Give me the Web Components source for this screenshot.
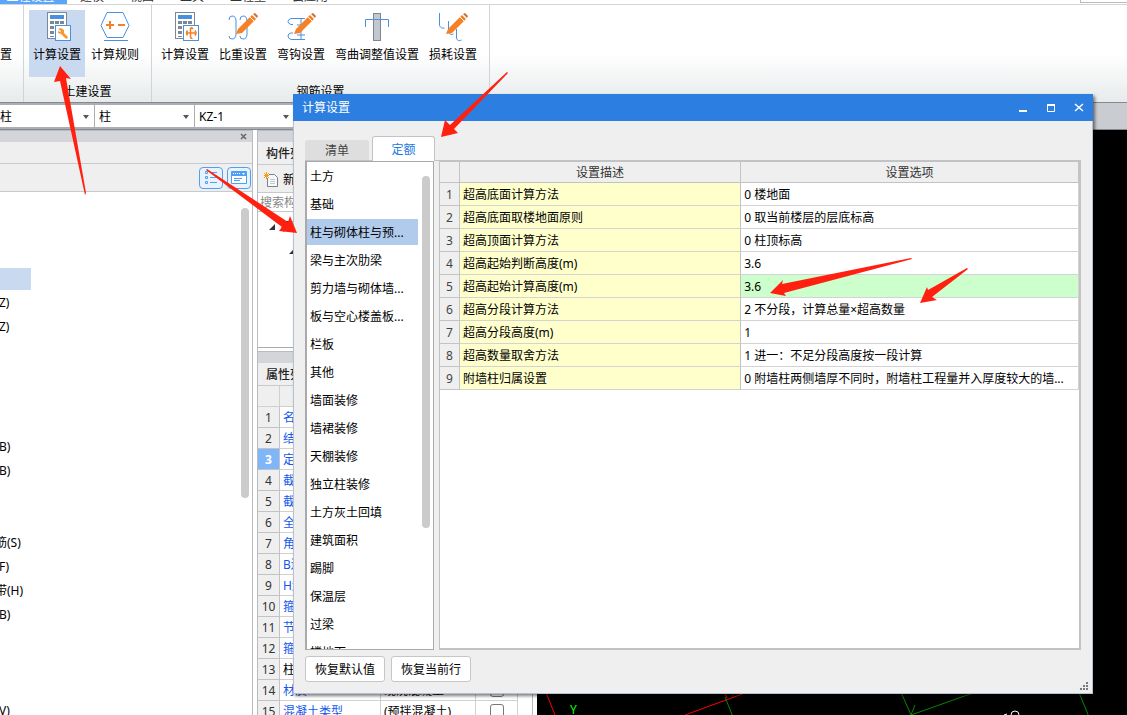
<!DOCTYPE html>
<html lang="zh-CN">
<head>
<meta charset="utf-8">
<title>计算设置</title>
<style>
html,body{height:100%}
body{margin:0;overflow:hidden;background:#fff;color:#000;font:12px/16px "Noto Sans","Noto Sans CJK SC",sans-serif}
</style>
</head>
<body>
<app-shell></app-shell>
<script>
const RESET = `*{box-sizing:border-box}button,select,input{font:inherit;color:inherit;margin:0}button{border:0;background:none;padding:0}`;
function define(name, html, setup) {
  customElements.define(name, class extends HTMLElement {
    constructor() {
      super();
      const t = document.createElement('template');
      t.innerHTML = (typeof html === 'function' ? html(this) : html).replace('<style>', '<style>' + RESET);
      this.attachShadow({mode: 'open'}).append(t.content.cloneNode(true));
    }
    connectedCallback() { if (setup) setup(this, this.shadowRoot); }
  });
}

/* ---------- icons ---------- */
const calc = `<g fill="none" stroke="#7b8794"><rect x="5.5" y=".5" width="19" height="26" fill="#fff"/></g><rect x="8" y="3" width="14" height="4" fill="#4a90e2"/><g fill="#7b8794"><path d="M8 9h4v3H8zM13 9h4v3h-4zM18 9h4v3h-4zM8 14h4v3H8zM8 19h4v3H8zM8 24h4v1H8z"/></g><rect x="13.5" y="13.5" width="15" height="15" fill="#fff" stroke="#4a90e2"/>`;
const pencil = `<path d="M8 22l2-5L24 3l4 4-14 14z" fill="#f58025"/><path d="M25 2l2-1 3 3-1 2z" fill="#c9733a"/><path d="M22 5l4 4" stroke="#fff"/>`;
const ICONS = {
  calcWrench: calc + `<path d="M16 17l3-1 3 2v3l4 4-1 2-2-1-4-4-3-1v-2l2 1 1-1z" fill="#f59a3c"/>`,
  calcMove: calc + `<path d="M20.500 16v9q0 1.500 2 1.500M20.500 16q1.500-.5 2.500 1M16 21h10M17.500 18.500q-2 2.500 0 5M25 18.500q2 2.500 0 5" fill="none" stroke="#f58025" stroke-width="1.500"/>`,
  rules: `<path d="M7 .5h16l6 13-6 12H7l-6-12z" fill="#fff" stroke="#4a90e2"/><path d="M4 28.5h24" stroke="#4a90e2"/><path d="M6 13h8M10 9v8M18 13h7" stroke="#f58025" stroke-width="2"/>`,
  weight: `<path d="M1 8q0-4 3-4 4 0 4 5v13q0 5-4 5-3 0-3-3M12 8q0-4 3-4 4 0 4 5v13q0 5-4 5-3 0-3-3" fill="none" stroke="#4a90e2"/>${pencil}`,
  hook: `<path d="M19 6.500H5q-3 1-3 3t3 3h2M19 27.500H5q-3-1-3-3.500t3-3h2M11 13h8M15 7v20M11 23h8" fill="none" stroke="#4a90e2"/>${pencil}`,
  bend: `<rect x="11.500" y="1.500" width="7" height="27" fill="#c3c8ce" stroke="#7b8794"/><path d="M-.5 15V7.500h23V15" transform="translate(4)" fill="none" stroke="#4a90e2"/>`,
  loss: `<path d="M1.500 1v12q1 4 5 3M10.500 9v10q1 5 5 3M18.500 17v9q1 4 5 2" fill="none" stroke="#4a90e2"/>${pencil}`,
  edge: `<path d="M0 4.500h15.500v22H0" fill="#fff" stroke="#7b8794"/><path d="M12 20l5-1 1 5-4 3z" fill="#f59a3c"/>`
};

define('ribbon-button', el => `<style>
:host{display:block;min-width:56px}
button{width:100%;height:67px;display:flex;flex-direction:column;align-items:center;padding:2px 4px 0;gap:5px;white-space:nowrap}
:host([active]) button{background:#c9d9f0}
:host([cut]){min-width:0}:host([cut]) button{padding:2px 0 0;align-items:flex-end}
svg{display:block;flex:none}
</style><button type="button"><svg width="30" height="30">${ICONS[el.getAttribute('icon')]}</svg><span><slot></slot></span></button>`);

define('ribbon-group', el => `<style>
:host{display:flex;flex-direction:column;gap:4px;flex:none;padding:5px 8px 0 5px;border-right:1px solid #d0d4d7}
:host([cut]){box-sizing:border-box;width:24px;padding:5px 11px 0 0;overflow:hidden;align-items:flex-end}
.row{display:flex;gap:2px}
.name{text-align:center;line-height:22px;padding-left:3px}
</style><div class="row"><slot></slot></div><div class="name">${el.getAttribute('name') || ''}</div>`);

define('app-menu', `<style>
:host{display:flex;height:5px;overflow:hidden;border-bottom:1px solid #d5d5d5;align-items:flex-end;color:#333;box-sizing:border-box}
nav{display:flex;align-items:flex-end;flex:1}
a{color:inherit;text-decoration:none;line-height:14px;width:50px;text-align:center;flex:none}
a.on{width:67px;background:#5aa6f8;color:#fff;padding-right:6px}
a.w{width:62px}
i{width:47px;height:3px;border:solid #bbb;border-width:0 0 1px 1px;align-self:flex-start}
</style><nav><a class="on" href="#">工程设置</a><a href="#">建模</a><a href="#">视图</a><a href="#">工具</a><a class="w" href="#">工程量</a><a class="w" href="#">云应用</a></nav><i></i>`);

define('app-ribbon', `<style>
:host{display:flex;height:97px;background:linear-gradient(#fff 50%,#e7ebec)}
</style>
<ribbon-group cut><ribbon-button cut icon="edge">置</ribbon-button></ribbon-group>
<ribbon-group name="土建设置"><ribbon-button active icon="calcWrench">计算设置</ribbon-button><ribbon-button icon="rules">计算规则</ribbon-button></ribbon-group>
<ribbon-group name="钢筋设置"><ribbon-button icon="calcMove">计算设置</ribbon-button><ribbon-button icon="weight">比重设置</ribbon-button><ribbon-button icon="hook">弯钩设置</ribbon-button><ribbon-button icon="bend">弯曲调整值设置</ribbon-button><ribbon-button icon="loss">损耗设置</ribbon-button></ribbon-group>`);

define('picker-bar', `<style>
:host{display:flex;height:28px;box-sizing:border-box;border:solid #858a90;border-width:1px 0;background:#c9ccd1;align-items:center}
label{display:block;position:relative;width:100px;height:26px;padding:2px 1px 2px 0;background:#abaeb2;flex:none}
label:first-of-type{width:95px}
select{appearance:none;display:block;width:100%;height:100%;border:0;border-radius:0;background:#fff;padding:1px 4px 0;outline:0}
label:first-of-type select{padding-left:0}
label::after{content:"";position:absolute;right:6px;top:12px;border:3px solid transparent;border-top:4px solid #555}
</style>
<label><select aria-label="楼层"><option>柱</option></select></label>
<label><select aria-label="类别"><option>柱</option></select></label>
<label><select aria-label="构件"><option>KZ-1</option></select></label>`);

define('nav-panel', `<style>
:host{display:flex;flex-direction:column;background:#fff;border-right:1px solid #b9bbc0;min-height:0;overflow:hidden}
.strip{height:12px;background:#d3d5db;display:flex;justify-content:flex-end;border-top:1px solid #b8bbc1}
.strip button{width:16px;height:11px;display:grid;place-items:center}
.head{height:22px;background:#efefef;border-bottom:1px solid #c6c9ce}
.tools{height:28px;background:#efefef;border-bottom:1px solid #c6c9ce;display:flex;gap:4px;justify-content:flex-end;align-items:center;padding-right:1px}
.tools button{width:24px;height:22px;border:1px solid #4da0f5;border-radius:4px;background:#e8f3fe;display:grid;place-items:center}
svg{display:block}
.body{flex:1;display:flex;min-height:0;overflow:hidden;justify-content:space-between}
ul{list-style:none;margin:0;padding:3px 0 0}
li{height:24px;line-height:24px;white-space:nowrap}
li.sel{width:31px;height:22px;margin:1px 0;background:#c9d9f0}
li.off{margin-left:-1px}
li.part{margin-left:-5px}
.bar{width:8px;height:290px;margin:16px 3px 0 0;border-radius:4px;background:#cbcbcb}
</style>
<div class="strip"><button aria-label="关闭"><svg width="8" height="8"><path d="M1 1l5 5M6 1L1 6" stroke="#666" stroke-width="1.5"/></svg></button></div>
<div class="head"></div>
<div class="tools"><button aria-label="列表"><svg width="16" height="16" fill="none" stroke="#4da0f5"><path d="M2.500 1.500h2v2h-2zM2.500 6.500h2v2h-2zM2.500 11.500h2v2h-2zM7 2.500h7M7 7.500h7M7 12.500h7"/></svg></button><button aria-label="窗口"><svg width="16" height="16" fill="none" stroke="#4da0f5"><path fill="#fff" d="M.5 1.500h15v12H.5z"/><path fill="#4da0f5" stroke="none" d="M1 1h14v5H1z"/><path d="M2 3.500h7" stroke="#fff" stroke-dasharray="1 1"/><path d="M11 3h3l-1.500 2z" fill="#fff" stroke="none"/><path d="M3 8.500h8M3 10.500h6"/></svg></button></div>
<div class="body"><ul></ul><div class="bar"></div></div>`, (el, r) => {
  const rows = ['', '', '', '*', 'Z)', 'Z)', '', '', '', '', 'B)', 'B)', '', '', '筋(S)', 'F)', '带(H)', 'B)', '', '', '', 'V)'];
  r.querySelector('ul').innerHTML = rows.map(t => `<li class="${t === '*' ? 'sel' : t.length > 2 ? 'part' : 'off'}">${t === '*' ? '' : t}</li>`).join('');
});

define('parts-panel', `<style>
:host{display:flex;flex-direction:column;background:#fff;border:solid #b9bbc0;border-width:0 1px;min-height:0;overflow:hidden}
.strip{height:12px;background:#d3d5db;border-top:1px solid #b8bbc1;flex:none}
h2{margin:0;font-size:12px;font-weight:500;height:23px;line-height:24px;padding-left:8px;background:#efefef;border-bottom:1px solid #c6c9ce;flex:none;color:#222}
.tools{height:28px;flex:none;background:#efefef;border-bottom:1px solid #c6c9ce}
.tools button{display:flex;align-items:center;gap:4px;height:28px;padding:1px 0 0 6px}
input[type=text]{height:19px;flex:none;border:0;border-bottom:1px solid #c6c9ce;padding:0 2px;outline:0;width:100%}
input::placeholder{color:#888;opacity:1}
.tree{height:136px;flex:none;border-bottom:1px solid #aaa;padding:3px 0 0 10px}
.tree div{height:24px;display:flex;align-items:center;gap:5px}
.tree div+div{padding-left:20px}
.gap{height:3px;flex:none}
table{border-collapse:separate;border-spacing:0;table-layout:fixed;width:260px;flex:none}
th,td{height:21px;padding:2px 0 0 3px;border:solid #d0d0d0;border-width:0 1px 1px 0;line-height:16px;white-space:nowrap;text-align:left;font-weight:400}
thead th,tbody th{background:#efefef;color:#333}
tbody th{text-align:center;padding:2px 0 0;border-color:#c3c3c3}
tbody td:nth-child(2){color:#1258ee}
tr.plain td:nth-child(2){color:#000}
tr.on th{background:#7fb6fa;color:#fff;font-weight:700}
td:last-child{text-align:center;padding:0}
input[type=checkbox]{appearance:none;display:block;width:14px;height:14px;margin:0 auto;border:1px solid #777;border-radius:3px;background:#fff}
</style>
<div class="strip"></div><h2>构件列</h2>
<div class="tools"><button><svg width="15" height="16"><path d="M3.500 2.500h7l3 3v9h-10z" fill="#f6f8fa" stroke="#76828e"/><path d="M6 7.500h5M6 9.500h5M6 11.500h5" stroke="#c3c9d0"/><path d="M0 1h5v5H0z" fill="#fff"/><path d="M0 1l5 5M5 1L0 6M2.500 0v7M0 3.500h5" stroke="#f59a1c"/></svg>新</button></div>
<input type="text" aria-label="搜索" placeholder="搜索构">
<div class="tree"><div><svg width="8" height="8"><path d="M7 1v6H1z" fill="#333"/></svg>框</div><div><svg width="8" height="8"><path d="M7 1v6H1z" fill="#333"/></svg></div></div>
<div class="gap"></div><div class="strip"></div><h2>属性列</h2>
<table><colgroup><col style="width:22px"><col style="width:101px"><col style="width:95px"><col></colgroup>
<thead><tr><th></th><th></th><th></th><th></th></tr></thead><tbody></tbody></table>`, (el, r) => {
  const names = ['名', '结', '定', '截', '截', '全', '角', 'B边', 'H边', '箍', '节', '箍', '柱', '材质', '混凝土类型'];
  const vals = {13: '现浇混凝土', 14: '(预拌混凝土)'};
  r.querySelector('tbody').innerHTML = names.map((n, i) => `<tr class="${i === 2 ? 'on' : i === 12 ? 'plain' : ''}"><th>${i + 1}</th><td>${n}</td><td>${vals[i] || ''}</td><td>${i > 12 ? `<input type="checkbox" aria-label="${n}">` : ''}</td></tr>`).join('');
});

define('model-canvas', `<style>
:host{display:block;background:#000;overflow:hidden}
svg{display:block;width:100%;height:100%}
text{font:12px "Noto Sans",sans-serif;fill:#0f0}
</style><svg fill="none"><g stroke="#f00"><path d="M8 560l12 30M148 585l60-22M186 560l4 8"/></g><g stroke="#080"><path d="M188 567l8 20M363 560l11 25 62-22M374 585l4-10M541 560l11 27"/></g><path d="M474 585a4 4 0 1 1 8 0M467 585l3-1" stroke="#fff"/><text x="33" y="584">Y</text></svg>`);

define('tab-strip', `<style>
:host{display:flex;box-sizing:border-box;align-items:flex-end;gap:3px;height:25px;border-bottom:1px solid #c0c3c8}
button{width:64px;height:20px;background:#dedede;border-radius:3px 3px 0 0;color:#444;padding-top:2px}
button.on{width:63px;height:25px;margin-bottom:-1px;background:#fff;border:1px solid #c0c3c8;border-bottom:0;color:#1b78e5}
</style><button role="tab">清单</button><button role="tab" class="on" aria-selected="true">定额</button>`);

define('category-list', `<style>
:host{display:flex;box-sizing:border-box;width:129px;border:1px solid #aaa;border-left-width:2px;background:#fff;overflow:hidden;flex:none;justify-content:space-between}
ul{list-style:none;margin:0;padding:1px 0 0;flex:1;min-width:0;height:0}
li{height:26px;line-height:28px;margin-bottom:2px;padding-left:3px;white-space:nowrap}
li.on{background:#b1cbec}
.bar{width:8px;height:352px;margin:14px 3px 0 4px;border-radius:4px;background:#cbcbcb;flex:none}
</style><ul></ul><div class="bar"></div>`, (el, r) => {
  const items = ['土方', '基础', '柱与砌体柱与预...', '梁与主次肋梁', '剪力墙与砌体墙...', '板与空心楼盖板...', '栏板', '其他', '墙面装修', '墙裙装修', '天棚装修', '独立柱装修', '土方灰土回填', '建筑面积', '踢脚', '保温层', '过梁', '楼地面'];
  r.querySelector('ul').innerHTML = items.map((t, i) => `<li class="${i === 2 ? 'on' : ''}">${t}</li>`).join('');
});

define('settings-grid', `<style>
:host{display:block;box-sizing:border-box;flex:1;min-width:0;background:#fff;border:1px solid #c3c3c3;border-width:1px 2px 2px 1px;overflow:hidden}
table{border-collapse:separate;border-spacing:0;table-layout:fixed;width:100%}
th,td{height:23px;padding:2px 3px 0;line-height:16px;border:solid #d3d3d3;border-width:0 1px 1px 0;text-align:left;white-space:nowrap;font-weight:400;overflow:hidden;text-overflow:ellipsis}
thead th{height:21px;background:#efefef;text-align:center;color:#333;border-color:#c3c3c3}
tbody th{background:#efefef;text-align:center;padding:2px 0 0;color:#444;border-color:#c3c3c3}
td:nth-child(2){background:#ffffcc;border-right-color:#c3c3c3}
tr.on td:nth-child(3){background:#ccffcc}
</style><table><colgroup><col style="width:20px"><col style="width:44%"><col></colgroup>
<thead><tr><th></th><th>设置描述</th><th>设置选项</th></tr></thead><tbody></tbody></table>`, (el, r) => {
  const rows = [['超高底面计算方法', '0 楼地面'], ['超高底面取楼地面原则', '0 取当前楼层的层底标高'], ['超高顶面计算方法', '0 柱顶标高'], ['超高起始判断高度(m)', '3.6'], ['超高起始计算高度(m)', '3.6'], ['超高分段计算方法', '2 不分段，计算总量×超高数量'], ['超高分段高度(m)', '1'], ['超高数量取舍方法', '1 进一：不足分段高度按一段计算'], ['附墙柱归属设置', '0 附墙柱两侧墙厚不同时，附墙柱工程量并入厚度较大的墙...']];
  r.querySelector('tbody').innerHTML = rows.map((c, i) => `<tr class="${i === 4 ? 'on' : ''}"><th>${i + 1}</th><td>${c[0]}</td><td>${c[1]}</td></tr>`).join('');
});

define('app-dialog', el => `<style>
:host{display:flex;flex-direction:column;box-sizing:border-box;background:#efefef;border:1px solid #b6c2d2;border-top:0;box-shadow:2px 2px 3px rgba(0,0,0,.5)}
header{height:27px;margin:0 -1px;flex:none;background:#2c7fe0;color:#fff;display:flex;align-items:center;padding:0 0 0 9px}
h1{flex:1;margin:0;font-size:12px;font-weight:400}
header button{width:28px;height:27px;display:grid;place-items:center}
svg{display:block}
.main{flex:1;display:flex;flex-direction:column;min-height:0;padding:15px 11px 0}
.row{flex:1;display:flex;gap:5px;min-height:0}
footer{display:flex;gap:6px;height:43px;padding:6px 3px 0 11px;flex:none;align-items:flex-start}
footer span{flex:1}
footer svg{align-self:flex-end;margin-bottom:2px}
</style>
<header><h1>${el.getAttribute('name')}</h1>
<button aria-label="最小化"><svg width="10" height="10"><path d="M1 8h8" stroke="#fff" stroke-width="2"/></svg></button>
<button aria-label="最大化"><svg width="10" height="10"><path d="M1.500 2v6.500h7V2" fill="none" stroke="#fff"/><path d="M1 2h8" stroke="#fff" stroke-width="2"/></svg></button>
<button aria-label="关闭"><svg width="10" height="10"><path d="M1 1l8 7M9 1L1 8" stroke="#fff" stroke-width="1.500"/></svg></button></header>
<div class="main"><slot name="tabs"></slot><div class="row"><slot></slot></div></div>
<footer><slot name="actions"></slot><span></span><svg width="9" height="9" fill="#777c84"><path d="M6 0h2v2H6zM3 3h2v2H3zM6 3h2v2H6zM0 6h2v2H0zM3 6h2v2H3zM6 6h2v2H6z"/></svg></footer>`);

define('push-button', `<style>
:host{display:block}
button{height:26px;padding:2px 9px 0;min-width:80px;background:#fff;border:1px solid #c6c6c6;border-radius:3px;white-space:nowrap}
</style><button type="button"><slot></slot></button>`);

define('arrow-marks', `<style>
:host{display:block;pointer-events:none}
svg{display:block;width:100%;height:100%}
</style><svg fill="#ff2010">
<path d="M60 66l11 13-5-1 20 115-1 2L60 81l-6 1z"/>
<path d="M297 233l-7-17-2 6-81-53-1 1 76 57-3 4z"/>
<path d="M441 137l4-17 5 5 57-53 1 1-54 56 4 4z"/>
<path d="M770 293l13-13-1 4 129-26 1 1-128 34 2 3z"/>
<path d="M920 303l7-16 1 3 39-22 1 1-36 28 5 3z"/>
</svg>`);

define('app-shell', `<style>
:host{display:flex;flex-direction:column;height:100vh;position:relative;overflow:hidden}
app-menu,app-ribbon,picker-bar{flex:none}
.work{flex:1;min-height:0;display:grid;grid-template-columns:253px 276px 1fr;grid-template-rows:minmax(0,1fr);column-gap:4px}
app-dialog{position:absolute;left:293px;right:34px;top:94px;bottom:21px}
arrow-marks{position:absolute;inset:0}
</style>
<app-menu></app-menu><app-ribbon></app-ribbon><picker-bar></picker-bar>
<div class="work"><nav-panel></nav-panel><parts-panel></parts-panel><model-canvas></model-canvas></div>
<app-dialog name="计算设置"><tab-strip slot="tabs"></tab-strip><category-list></category-list><settings-grid></settings-grid><push-button slot="actions">恢复默认值</push-button><push-button slot="actions">恢复当前行</push-button></app-dialog>
<arrow-marks></arrow-marks>`);
</script>
</body>
</html>
